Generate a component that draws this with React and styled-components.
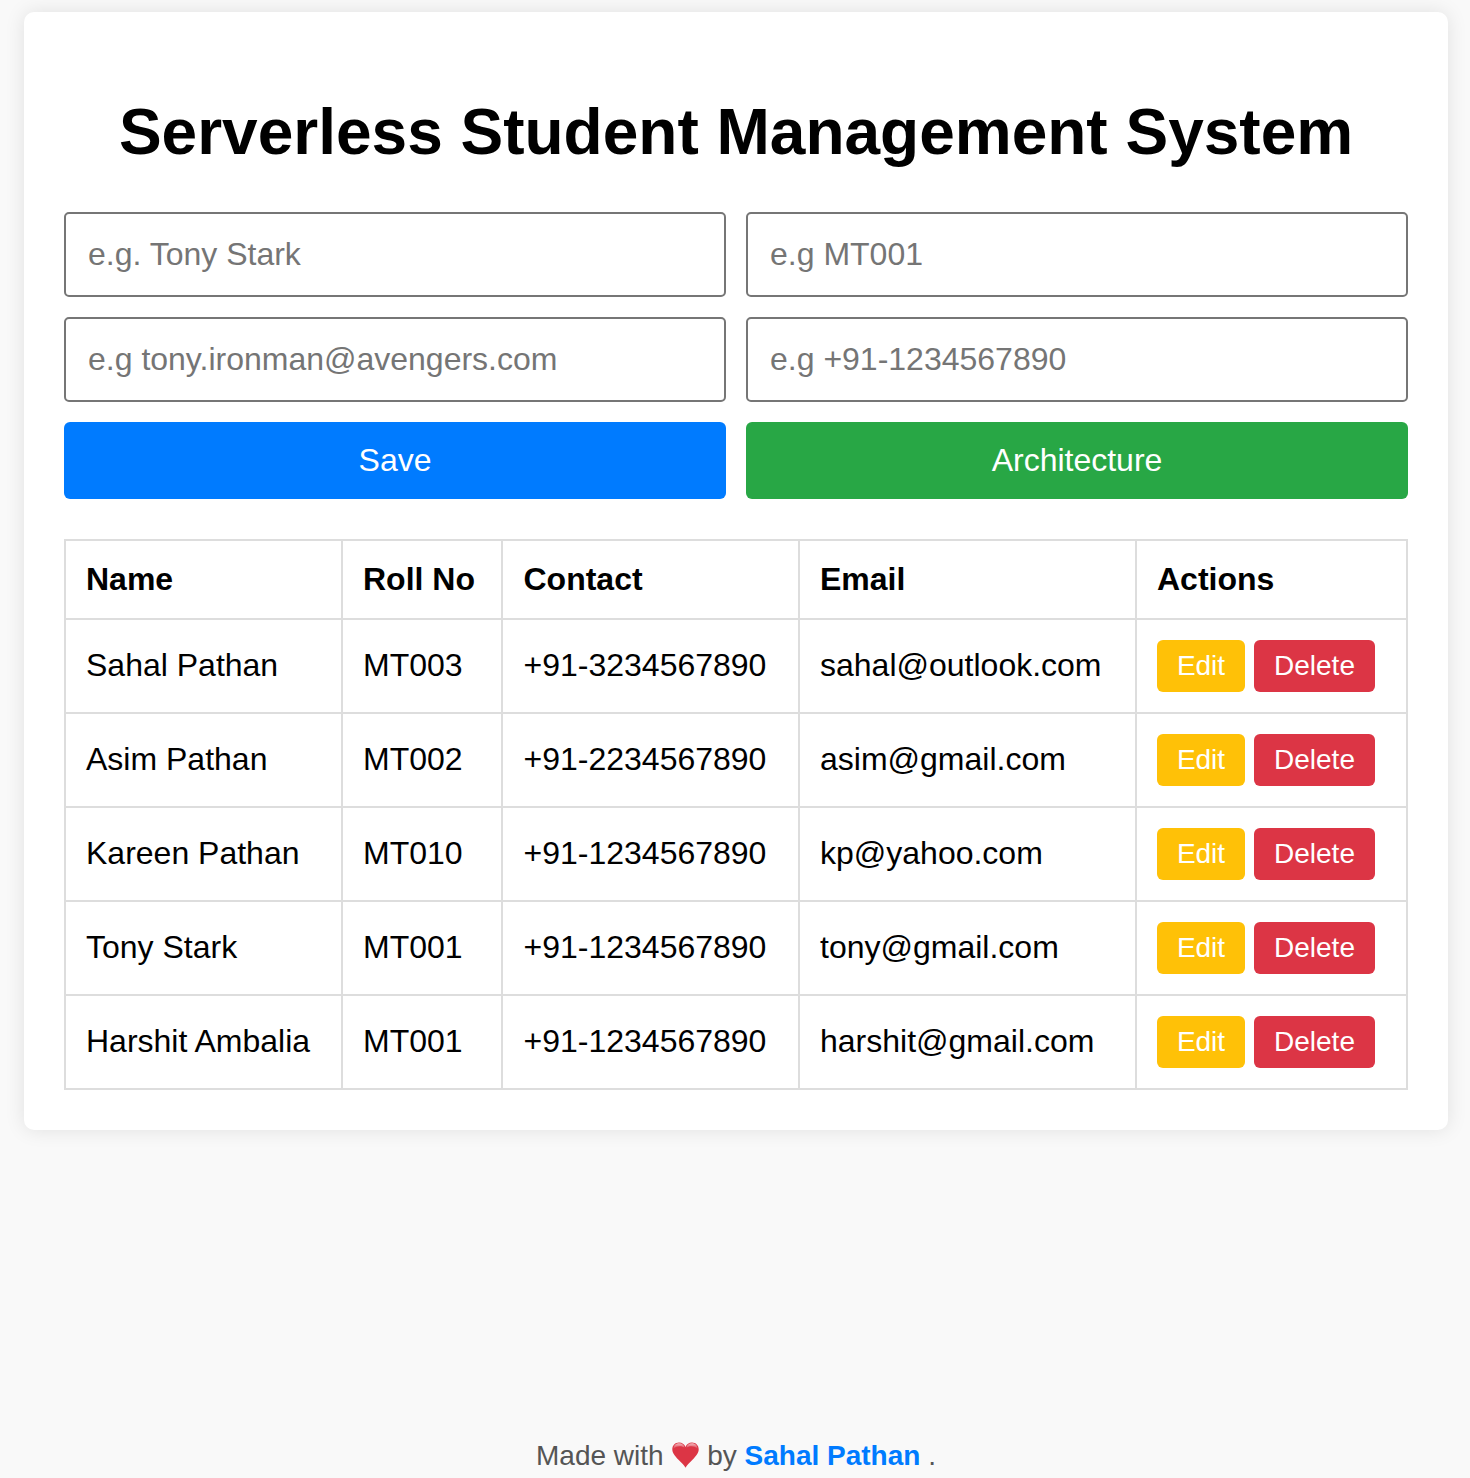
import React from "react";
import styled, { createGlobalStyle } from "styled-components";

const Global = createGlobalStyle`
  *, *::before, *::after { box-sizing: border-box; }
  html, body { margin: 0; padding: 0; }
  body {
    background: #f9f9f9;
    color: #000;
    font-family: "Liberation Sans", Arial, sans-serif;
    overflow: hidden;
  }
`;

const Page = styled.div`
  display: flex;
  flex-direction: column;
  height: 1478px;
  padding: 12px 22px 0 24px;
`;

const Card = styled.main`
  height: 1118px;
  flex: none;
  padding: 84px 40px 0;
  background: #fff;
  border-radius: 10px;
  box-shadow: 0 0 20px rgba(0, 0, 0, 0.1);
`;

const Title = styled.h1`
  margin: 0 0 43px;
  font-size: 64px;
  line-height: 73px;
  text-align: center;
  white-space: nowrap;
`;

const Form = styled.form`
  display: grid;
  grid-template-columns: 1fr 1fr;
  grid-template-rows: 85px 85px 77px;
  gap: 20px;
`;

const Field = styled.input`
  width: 100%;
  height: 100%;
  padding: 0 22px;
  border: 2px solid #767676;
  border-radius: 5px;
  background: #fff;
  font: 32px "Liberation Sans", Arial, sans-serif;
  &::placeholder { color: #757575; opacity: 1; }
`;

const FormButton = styled.button`
  padding: 0;
  border: 0;
  border-radius: 6px;
  background: ${(p) => p.$color};
  color: #fff;
  font: 32px "Liberation Sans", Arial, sans-serif;
`;

const Table = styled.table`
  width: 1344px;
  margin-top: 40px;
  border-collapse: collapse;
  table-layout: fixed;
  font-size: 32px;
`;

const HeadCell = styled.th`
  height: 79px;
  padding: 0 20px;
  border: 2px solid #ddd;
  text-align: left;
  &:nth-child(3) { padding-left: 20.5px; }
`;

const Cell = styled.td`
  height: 94px;
  padding: 0 20px 2px;
  border: 2px solid #ddd;
  white-space: nowrap;
  &:nth-child(3) { padding-left: 20.5px; }
  &:last-child { padding-bottom: 0; }
`;

const Actions = styled.div`
  display: flex;
  gap: 9px;
`;

const ActionButton = styled.button`
  width: ${(p) => p.$width}px;
  height: 52px;
  padding: 0;
  border: 0;
  border-radius: 6px;
  background: ${(p) => p.$color};
  color: #fff;
  font: 28px "Liberation Sans", Arial, sans-serif;
`;

const Footer = styled.footer`
  display: flex;
  justify-content: center;
  align-items: center;
  height: 32px;
  margin-top: auto;
  margin-bottom: 6px;
  color: #555;
  font-size: 28px;
  white-space: pre;
`;

const Heart = styled.svg`
  width: 27px;
  height: 26px;
  margin: 0 0 2px 1px;
`;

const Author = styled.a`
  color: #007bff;
  font-weight: bold;
  text-decoration: none;
`;

const columns = [
  ["Name", 277],
  ["Roll No", 160],
  ["Contact", 297],
  ["Email", 337],
  ["Actions", 271],
];

const students = [
  ["Sahal Pathan", "MT003", "+91-3234567890", "sahal@outlook.com"],
  ["Asim Pathan", "MT002", "+91-2234567890", "asim@gmail.com"],
  ["Kareen Pathan", "MT010", "+91-1234567890", "kp@yahoo.com"],
  ["Tony Stark", "MT001", "+91-1234567890", "tony@gmail.com"],
  ["Harshit Ambalia", "MT001", "+91-1234567890", "harshit@gmail.com"],
];

export default function App() {
  return (
    <>
      <Global />
      <Page>
        <Card>
          <Title>Serverless Student Management System</Title>
          <Form>
            <Field placeholder="e.g. Tony Stark" />
            <Field placeholder="e.g MT001" />
            <Field placeholder="e.g tony.ironman@avengers.com" />
            <Field placeholder="e.g +91-1234567890" />
            <FormButton type="button" $color="#007bff">Save</FormButton>
            <FormButton type="button" $color="#28a745">Architecture</FormButton>
          </Form>
          <Table>
            <colgroup>
              {columns.map(([name, width]) => <col key={name} width={width} />)}
            </colgroup>
            <thead>
              <tr>{columns.map(([name]) => <HeadCell key={name}>{name}</HeadCell>)}</tr>
            </thead>
            <tbody>
              {students.map((row) => (
                <tr key={row[0]}>
                  {row.map((value) => <Cell key={value}>{value}</Cell>)}
                  <Cell>
                    <Actions>
                      <ActionButton $width={88} $color="#ffc107">Edit</ActionButton>
                      <ActionButton $width={121} $color="#dc3545">Delete</ActionButton>
                    </Actions>
                  </Cell>
                </tr>
              ))}
            </tbody>
          </Table>
        </Card>
        <Footer>
          <span>Made with </span>
          <Heart viewBox="0 0 27 26" aria-label="love">
            <defs>
              <linearGradient id="gloss" x1="0" y1="0" x2="0" y2="1">
                <stop offset="0" stopColor="#fff" stopOpacity="0.65" />
                <stop offset="1" stopColor="#fff" stopOpacity="0.05" />
              </linearGradient>
            </defs>
            <path fill="#dc3545" d="M13.500 25.800C12.500 23.500 9.500 20.800 6.500 17.700 3 14 0.300 11 .3 7.200.3 3.300 3.200.4 7 .4c3 0 5.400 1.700 6.500 4.500C14.600 2.100 17 .4 20 .4c3.800 0 6.700 2.900 6.700 6.800 0 3.800-2.700 6.800-6.200 10.500-3 3.100-6 5.800-7 8.100Z" />
            <path fill="url(#gloss)" d="M1.500 6.800C1.500 3.500 4 1.300 7 1.300s5.200 1.800 5.500 4.400C10.500 3.800 4.500 3.200 1.500 6.800ZM25.500 6.800C25.500 3.500 23 1.300 20 1.300s-5.200 1.800-5.500 4.400c2-1.900 8-2.500 11 1.100Z" />
          </Heart>
          <span> by </span>
          <Author>Sahal Pathan</Author>
          <span> .</span>
        </Footer>
      </Page>
    </>
  );
}
